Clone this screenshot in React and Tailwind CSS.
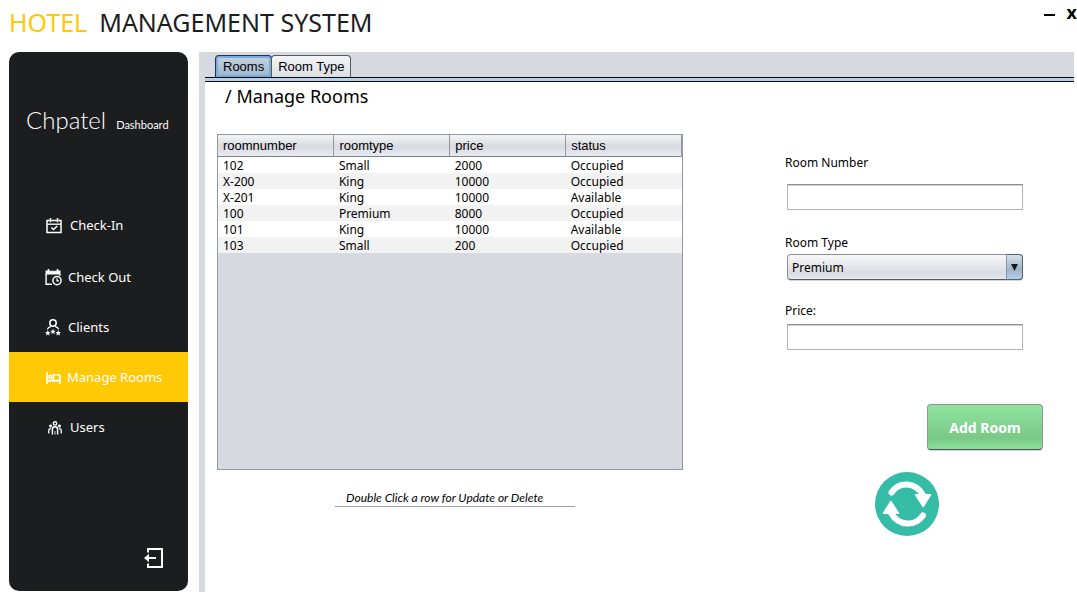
import React, { useState } from "react";

const rooms = [
  ["102", "Small", "2000", "Occupied"],
  ["X-200", "King", "10000", "Occupied"],
  ["X-201", "King", "10000", "Available"],
  ["100", "Premium", "8000", "Occupied"],
  ["101", "King", "10000", "Available"],
  ["103", "Small", "200", "Occupied"],
];

const columns = ["roomnumber", "roomtype", "price", "status"];

function CheckInIcon() {
  return (
    <svg width="16" height="16" viewBox="0 0 16 16" fill="none" stroke="currentColor" aria-hidden="true">
      <path d="M1 2.6H15V14.5H1Z" strokeWidth="1.5" />
      <path d="M1 6.2H15" strokeWidth="1.3" />
      <path d="M4.5 0V4.3M11.5 0V4.3" strokeWidth="1.5" />
      <path d="M5.3 9.5L7.5 11.5L11.2 8" strokeWidth="1.6" />
    </svg>
  );
}

function CheckOutIcon() {
  return (
    <svg width="17" height="17" viewBox="0 0 17 17" fill="none" stroke="currentColor" aria-hidden="true">
      <path d="M0.5 1.5H15.5V5.5H0.5Z" fill="currentColor" stroke="none" />
      <path d="M3.5 0V2M12.5 0V2" strokeWidth="1.6" />
      <path d="M4.5 1.7H11.5" stroke="#1c1d1f" strokeWidth=".6" />
      <path d="M1.1 5V15.2H7" strokeWidth="1.4" />
      <path d="M14.9 5V7" strokeWidth="1.2" />
      <circle cx="12" cy="11.6" r="4.1" strokeWidth="1.5" />
      <path d="M12 9.2V11.9H14" strokeWidth="1.2" />
    </svg>
  );
}

const STAR = "M0-2.9L.8-.9 2.8-.8 1.2.5 1.8 2.5 0 1.4-1.8 2.5-1.2.5-2.8-.8-.8-.9Z";

function ClientsIcon() {
  return (
    <svg width="16" height="17" viewBox="0 0 16 17" fill="none" stroke="currentColor" aria-hidden="true">
      <circle cx="8" cy="4" r="3.2" strokeWidth="1.5" />
      <path d="M2.3 10.4C2.8 8.8 4 8 5.8 7.3M13.7 10.4C13.2 8.8 12 8 10.2 7.3" strokeWidth="1.3" />
      <g fill="currentColor" stroke="none">
        <path transform="translate(2.8 14)" d={STAR} />
        <path transform="translate(8 12.6)" d={STAR} />
        <path transform="translate(13.2 14)" d={STAR} />
      </g>
    </svg>
  );
}

function BedIcon() {
  return (
    <svg width="15" height="12" viewBox="0 0 15 12" fill="none" stroke="currentColor" aria-hidden="true">
      <path d="M1 0V12M14 4V12" strokeWidth="1.6" />
      <path d="M1 8.7H14" strokeWidth="2" />
      <circle cx="4.4" cy="4.8" r="1.5" strokeWidth="1.5" />
      <path d="M7.4 8.5V2.8H12.3C13.4 2.8 14 3.4 14 4.4V8.5" strokeWidth="1.6" />
    </svg>
  );
}

function UsersIcon() {
  return (
    <svg width="14" height="14" viewBox="0 0 14 14" fill="none" stroke="currentColor" aria-hidden="true">
      <circle cx="7" cy="2.4" r="1.7" strokeWidth="1.4" />
      <circle cx="2.6" cy="5" r="1.3" fill="currentColor" strokeWidth=".6" />
      <circle cx="11.4" cy="5" r="1.3" fill="currentColor" strokeWidth=".6" />
      <path d="M4.4 13.6V8.4C4.4 6.5 5.4 5.7 7 5.7S9.6 6.5 9.6 8.4V13.6" strokeWidth="1.5" />
      <path d="M.8 12.6V9.4C.8 8.2 1.4 7.6 3 7.6M13.2 12.6V9.4C13.2 8.2 12.6 7.6 11 7.6" strokeWidth="1.3" />
      <path d="M7 13.6V10" strokeWidth=".8" />
    </svg>
  );
}

function LogoutIcon() {
  return (
    <svg width="20" height="20" viewBox="0 0 20 20" fill="none" stroke="currentColor" aria-hidden="true">
      <path d="M4 4.5V1H18V19H4V15.5" strokeWidth="2" />
      <path d="M3 10H12" strokeWidth="2" />
      <path d="M0 10L5 5.8V14.2Z" fill="currentColor" stroke="none" />
    </svg>
  );
}

function RefreshIcon() {
  return (
    <svg width="64" height="64" viewBox="0 0 64 64" fill="none" aria-hidden="true">
      <circle cx="32" cy="32" r="32" fill="#35bca6" />
      <g stroke="#fff" strokeWidth="6" strokeLinecap="round">
        <path d="M16.5 20.5C24 9.3 40 9.3 48 23" />
        <path d="M48 43.500C40 54.700 24 54.700 16 41" />
      </g>
      <g fill="#fff" stroke="#fff" strokeWidth="1.500" strokeLinejoin="round">
        <path d="M40.500 22.800H55.500L48.200 34.500Z" />
        <path d="M23.500 41.200H8.500L15.800 29.500Z" />
      </g>
    </svg>
  );
}

const navItems = [
  { label: "Check-In", Icon: CheckInIcon, style: "mb-0.5 pl-[37px] gap-2" },
  { label: "Check Out", Icon: CheckOutIcon, style: "pl-9 gap-1.5" },
  { label: "Clients", Icon: ClientsIcon, style: "pl-9 gap-[7px]" },
  { label: "Manage Rooms", Icon: BedIcon, style: "pl-[37px] gap-1.5 bg-[#ffc905]", active: true },
  { label: "Users", Icon: UsersIcon, style: "pl-[39px] gap-2" },
];

function Sidebar() {
  return (
    <aside className="flex w-[179px] shrink-0 flex-col rounded-[10px] bg-[#1c1d1f] text-white">
      <div className="flex h-[148px] items-baseline gap-2.5 pl-[17px] pt-[53px] font-['Lato',sans-serif]">
        <span className="text-[24px] leading-[30px] font-light">Chpatel</span>
        <span className="text-[11px] leading-[30px]">Dashboard</span>
      </div>
      <nav className="flex flex-col">
        {navItems.map(({ label, Icon, style, active }) => (
          <a
            key={label}
            href="#"
            aria-current={active ? "page" : undefined}
            className={`flex h-[50px] items-center pt-px text-[13px] ${style}`}
          >
            <Icon />
            {label}
          </a>
        ))}
      </nav>
      <button type="button" aria-label="Log out" className="mt-auto mr-6 mb-[23px] self-end">
        <LogoutIcon />
      </button>
    </aside>
  );
}

function RoomsTable() {
  return (
    <div className="min-h-[336px] border border-[#9297a1] bg-[#d6d9df]">
      <table className="w-full table-fixed border-collapse text-left">
        <thead>
          <tr className="h-[22px] bg-linear-to-b from-[#f5f5f7] via-[#d9dbe0] to-[#e9ebf3] font-['Liberation_Sans',sans-serif] text-[13px] leading-5 shadow-[inset_0_-1px_0_#7d818b]">
            {columns.map((name) => (
              <th key={name} scope="col" className="border-r border-[#9297a1] py-0 pl-[5px] font-normal">
                {name}
              </th>
            ))}
          </tr>
        </thead>
        <tbody className="text-[12px] leading-[14px]">
          {rooms.map((row) => (
            <tr key={row[0]} className="bg-white even:bg-[#f2f2f2]">
              {row.map((cell, i) => (
                <td key={i} className="pt-0.5 pb-0 pl-[5px]">
                  {cell}
                </td>
              ))}
            </tr>
          ))}
        </tbody>
      </table>
    </div>
  );
}

function TextField({ id }) {
  return (
    <input
      id={id}
      type="text"
      className="block h-[26px] w-full border border-[#b4b4b4] border-t-[#8e8e8e] bg-white px-1.5 text-[12px] shadow-[inset_0_1px_0_#d2d2d2] outline-none"
    />
  );
}

function RoomForm() {
  const [type, setType] = useState("Premium");
  return (
    <form className="flex flex-col pt-[21px] text-[12px] leading-4" onSubmit={(e) => e.preventDefault()}>
      <div className="mr-5">
        <label htmlFor="room-number" className="block">Room Number</label>
        <div className="mt-[13px] ml-0.5">
          <TextField id="room-number" />
        </div>
      </div>
      <div className="mt-[25px] mr-5">
        <label htmlFor="room-type" className="block">Room Type</label>
        <div className="relative mt-[3px] ml-0.5">
          <select
            id="room-type"
            value={type}
            onChange={(e) => setType(e.target.value)}
            className="block h-[26px] w-full appearance-none rounded border border-[#8b8f98] border-b-[#555a63] bg-linear-to-b from-[#f8f8fa] via-[#d8dbe1] via-75% to-[#e6e9f2] px-1 pt-0.5 text-[12px] shadow-[0_1px_0_#d3d5d9] outline-none"
          >
            <option>Premium</option>
            <option>King</option>
            <option>Small</option>
          </select>
          <span className="pointer-events-none absolute inset-y-0 right-0 flex w-[17px] items-center justify-center rounded-r border border-[#4d6479] border-l-[#8797a8] bg-linear-to-b from-[#d8e2ea] via-[#9fb4c8] via-60% to-[#b5cee8]">
            <svg width="7" height="7" viewBox="0 0 7 7" aria-hidden="true">
              <path d="M0 0H7L3.500 7Z" fill="#15191d" />
            </svg>
          </span>
        </div>
      </div>
      <div className="mt-[23px] mr-5">
        <label htmlFor="price" className="block">Price:</label>
        <div className="mt-[5px] ml-0.5">
          <TextField id="price" />
        </div>
      </div>
      <button
        type="submit"
        className="mt-[54px] h-[46px] w-[116px] self-end rounded border border-[#8c9a92] border-b-[#4b5a50] bg-linear-to-b from-[#92e3a0] via-[#7ac887] via-75% to-[#8be39b] pt-0.5 text-[14px] font-bold text-white shadow-[0_1px_0_#d3d5d9]"
      >
        Add Room
      </button>
      <button type="button" aria-label="Refresh" className="mt-[22px] ml-[90px] self-start rounded-full">
        <RefreshIcon />
      </button>
    </form>
  );
}

function Tabs() {
  return (
    <div role="tablist" className="flex h-[30px] flex-col bg-[#d6d9df] font-['Liberation_Sans',sans-serif] text-[13px]">
      <div className="flex h-[25px] items-end pl-4">
        <button
          type="button"
          role="tab"
          aria-selected="true"
          className="h-[22px] rounded-t border border-b-0 border-[#22304a] bg-linear-to-b from-[#c3d2df] to-[#9fb6cc] px-[7px] shadow-[inset_0_0_0_2px_#7aa9db]"
        >
          Rooms
        </button>
        <button
          type="button"
          role="tab"
          aria-selected="false"
          className="-ml-px h-[22px] rounded-t border border-b-0 border-[#55585f] bg-linear-to-b from-[#f4f4f6] to-[#dcdee3] px-1.5"
        >
          Room Type
        </button>
      </div>
      <div className="ml-1.5 h-[5px] border-y border-[#05070f] bg-[#b9cfe4]" />
    </div>
  );
}

export default function App() {
  return (
    <div className="flex min-h-screen flex-col bg-white font-['Noto_Sans',sans-serif] text-black">
      <header className="flex h-[52px] justify-between overflow-hidden pl-[9px]">
        <h1 className="flex gap-3 pt-1 text-[25px] leading-9">
          <span className="text-[#ffc905]">HOTEL</span>
          <span className="text-[#1c1d1f]">MANAGEMENT SYSTEM</span>
        </h1>
        <div className="flex items-start gap-3 pt-0.5 text-[18px] leading-5 font-bold">
          <button type="button" aria-label="Minimize" className="flex h-3.5 items-end">
            <span className="block h-0.5 w-[11px] bg-black" />
          </button>
          <button type="button" aria-label="Close">x</button>
        </div>
      </header>
      <div className="flex grow pr-[3px] pb-[3px] pl-[9px]">
        <div className="mb-px flex">
          <Sidebar />
        </div>
        <main className="ml-[11px] flex grow flex-col">
          <Tabs />
          <div className="grow border-l-[6px] border-[#d6d9df] pr-[31px] pl-3">
            <h2 className="pt-0.5 pl-2 text-[18px] leading-6">/ Manage Rooms</h2>
            <div className="mt-[26px] grid grid-cols-[466fr_258fr] gap-x-[102px]">
              <section>
                <RoomsTable />
                <p className="mt-5 ml-[118px] w-[240px] border-b border-[#9aa3ad] pl-[11px] font-['Lato',sans-serif] text-[12px] leading-4 italic">
                  Double Click a row for Update or Delete
                </p>
              </section>
              <RoomForm />
            </div>
          </div>
        </main>
      </div>
    </div>
  );
}
